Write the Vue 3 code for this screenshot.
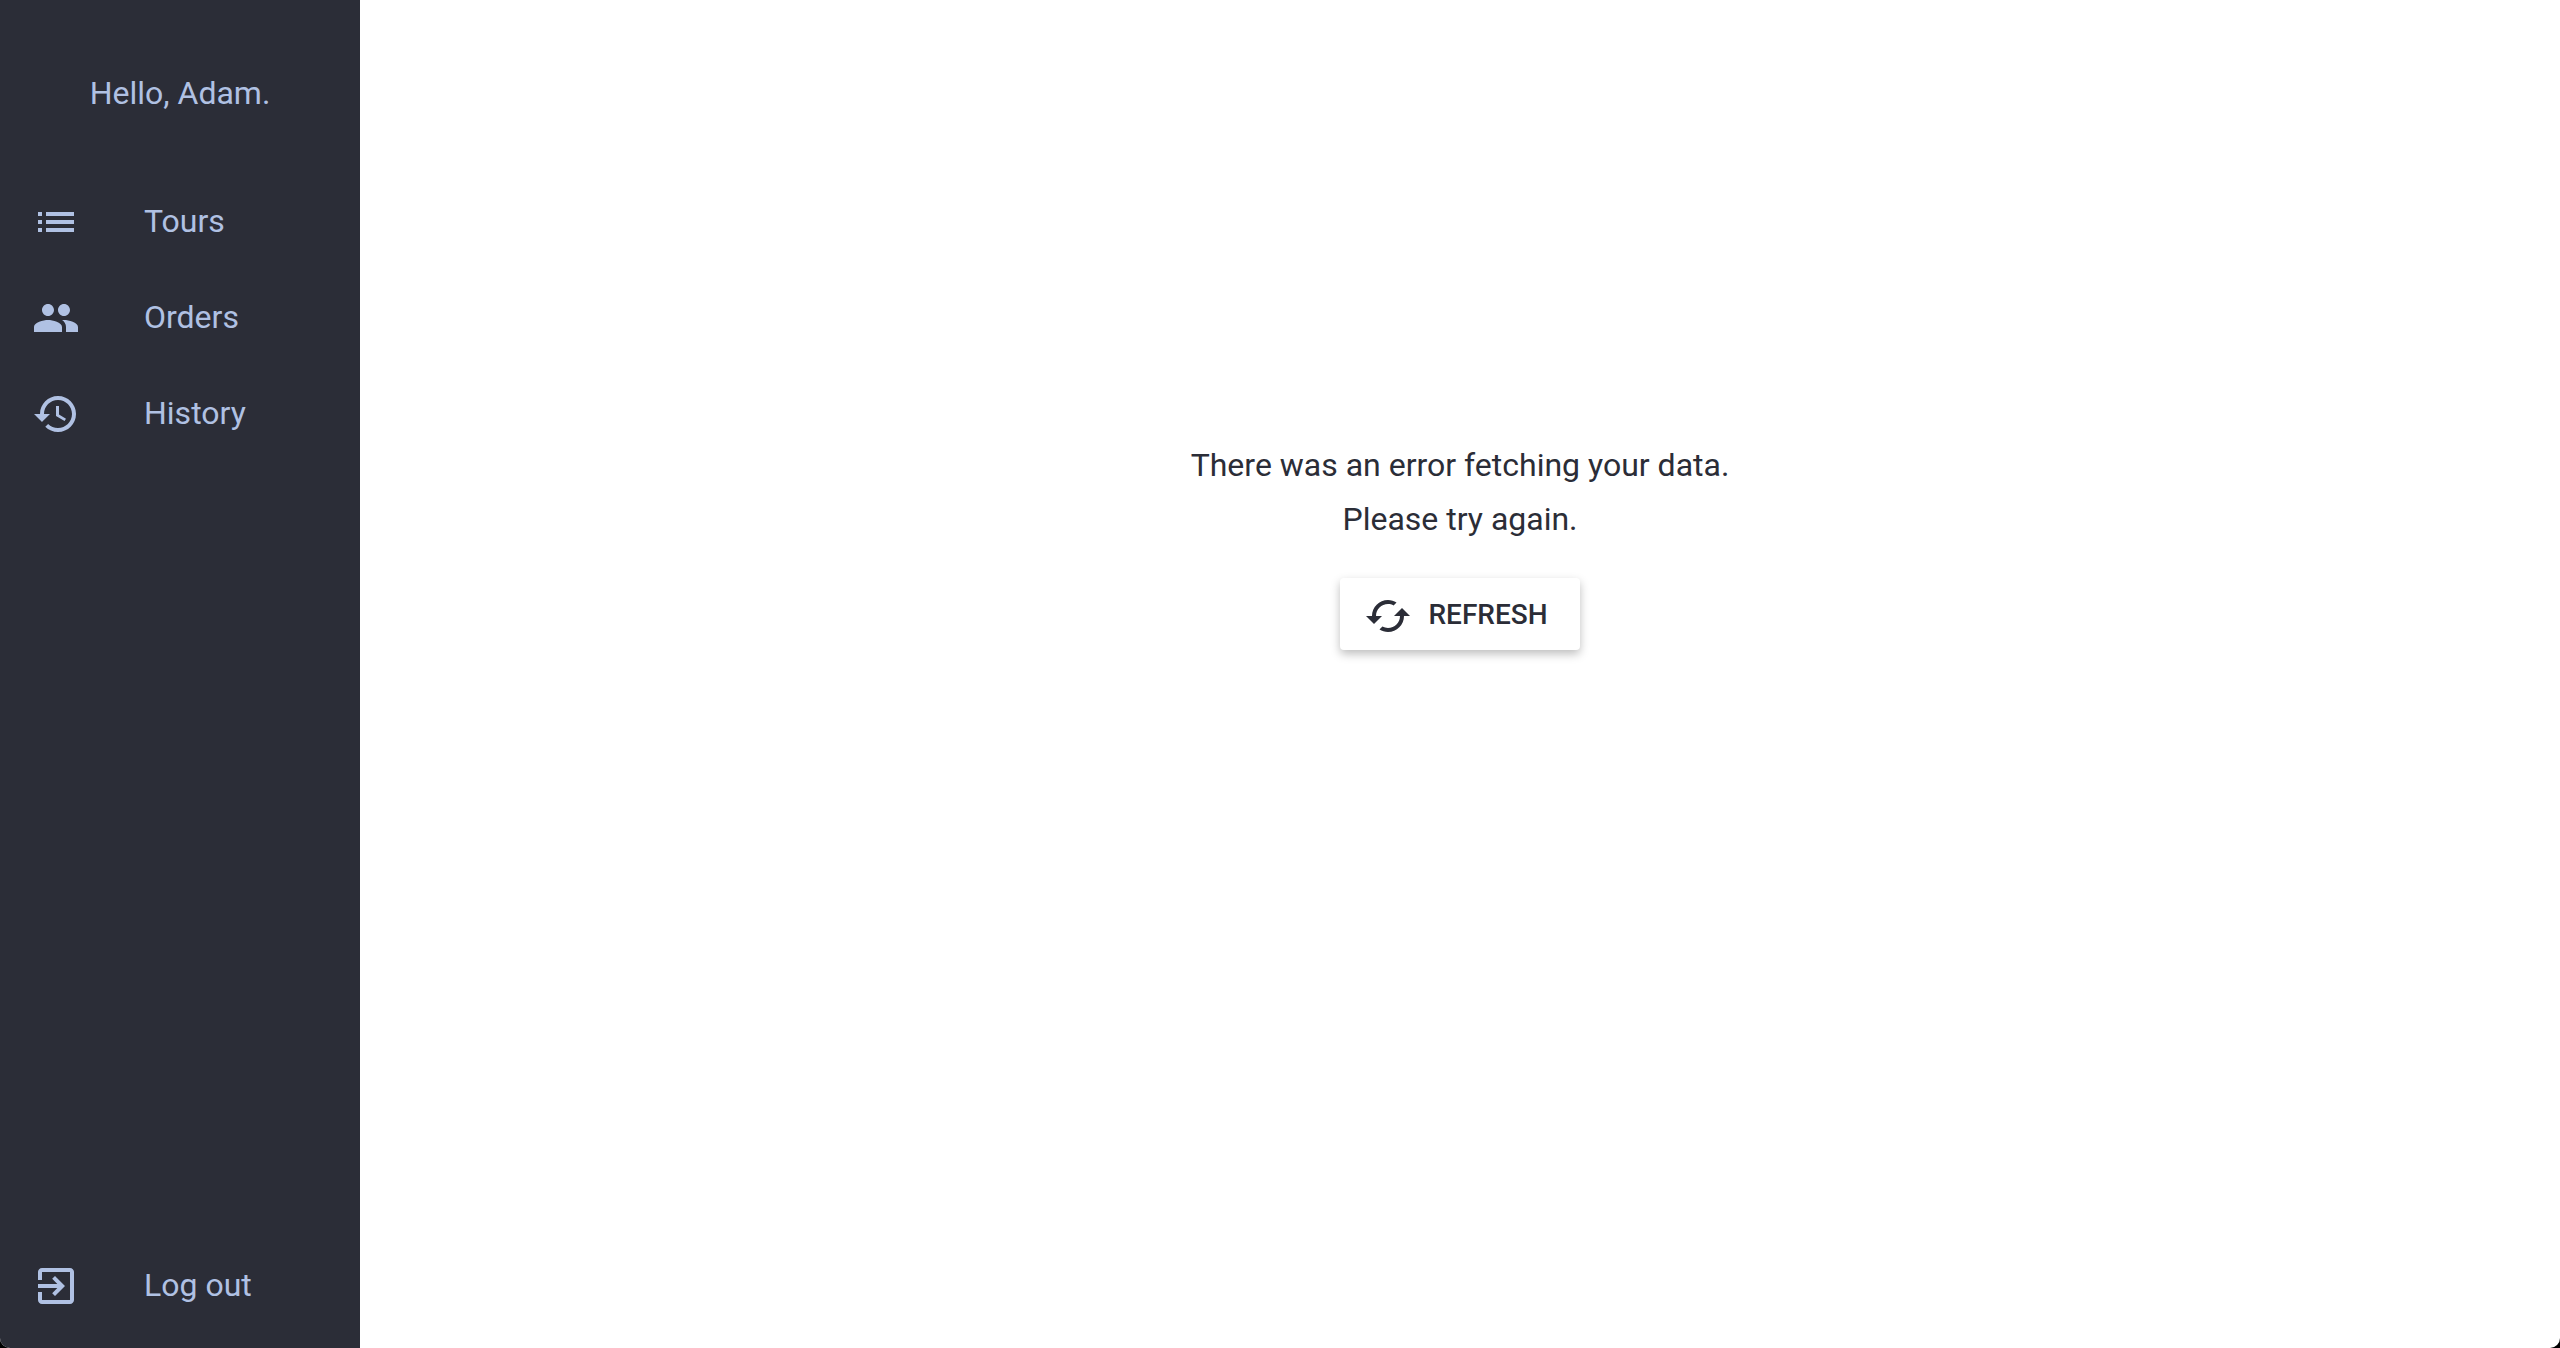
<script setup>
const links = [
  {
    label: 'Tours',
    icon: 'M3 13h2v-2H3v2zm0 4h2v-2H3v2zm0-8h2V7H3v2zm4 4h14v-2H7v2zm0 4h14v-2H7v2zM7 7v2h14V7H7z',
  },
  {
    label: 'Orders',
    icon: 'M16 11c1.66 0 2.99-1.34 2.99-3S17.66 5 16 5c-1.66 0-3 1.34-3 3s1.34 3 3 3zm-8 0c1.66 0 2.99-1.34 2.99-3S9.66 5 8 5C6.34 5 5 6.34 5 8s1.34 3 3 3zm0 2c-2.33 0-7 1.17-7 3.5V19h14v-2.5c0-2.33-4.67-3.5-7-3.5zm8 0c-.29 0-.62.02-.97.05 1.16.84 1.97 1.97 1.97 3.45V19h6v-2.5c0-2.33-4.67-3.5-7-3.5z',
  },
  {
    label: 'History',
    icon: 'M13 3c-4.97 0-9 4.03-9 9H1l3.89 3.89.07.14L9 12H6c0-3.87 3.13-7 7-7s7 3.13 7 7-3.13 7-7 7c-1.93 0-3.68-.79-4.94-2.06l-1.42 1.42C8.27 19.99 10.51 21 13 21c4.97 0 9-4.03 9-9s-4.03-9-9-9zm-1 5v5l4.28 2.54.72-1.21-3.5-2.08V8H12z',
  },
]
</script>

<template>
  <div class="app">
    <aside class="sidebar">
      <p class="greeting">Hello, Adam.</p>
      <nav class="links">
        <a v-for="link in links" :key="link.label" class="link">
          <svg class="icon" viewBox="0 0 24 24"><path :d="link.icon" /></svg>
          <span class="label">{{ link.label }}</span>
        </a>
      </nav>
      <a class="link logout">
        <svg class="icon" viewBox="0 0 24 24">
          <path d="M10.09 15.59L11.5 17l5-5-5-5-1.41 1.41L12.67 11H3v2h9.67l-2.58 2.59zM19 3H5c-1.11 0-2 .9-2 2v4h2V5h14v14H5v-4H3v4c0 1.1.89 2 2 2h14c1.1 0 2-.9 2-2V5c0-1.1-.9-2-2-2z" />
        </svg>
        <span class="label">Log out</span>
      </a>
    </aside>
    <main class="content">
      <p class="message">There was an error fetching your data.<br />Please try again.</p>
      <button class="refresh">
        <svg class="icon refresh-icon" viewBox="0 0 24 24">
          <path d="M19 8l-4 4h3c0 3.31-2.69 6-6 6-1.01 0-1.97-.25-2.8-.7l-1.46 1.46C8.97 19.54 10.43 20 12 20c4.42 0 8-3.58 8-8h3l-4-4zM6 12c0-3.31 2.69-6 6-6 1.01 0 1.97.25 2.8.7l1.46-1.46C15.03 4.46 13.57 4 12 4c-4.42 0-8 3.58-8 8H1l4 4 4-4H6z" />
        </svg>
        <span class="refresh-label">REFRESH</span>
      </button>
    </main>
  </div>
</template>

<style>
body {
  background: #000;
}
</style>

<style scoped>
.app {
  display: flex;
  height: 100vh;
  overflow: hidden;
  border-radius: 0 0 10px 10px;
  background: #fff;
  color: #2b2d37;
  font-family: Roboto, "Liberation Sans", sans-serif;
  font-size: 32px;
}
.sidebar {
  display: flex;
  flex-direction: column;
  box-sizing: border-box;
  width: 360px;
  padding-bottom: 14px;
  background: #2b2d37;
  color: #b0c1e3;
}
.greeting {
  margin: 66px 0 54px;
  line-height: 54px;
  text-align: center;
}
.link {
  display: flex;
  align-items: center;
  gap: 64px;
  height: 96px;
  padding-left: 32px;
}
.label {
  margin-bottom: 2px;
  line-height: 38px;
}
.logout {
  margin-top: auto;
}
.icon {
  flex: none;
  width: 48px;
  height: 48px;
  fill: currentColor;
}
.content {
  display: flex;
  flex: 1;
  flex-direction: column;
  align-items: center;
  padding-top: 438px;
}
.message {
  margin: 0 0 32px;
  line-height: 54px;
  text-align: center;
}
.refresh {
  display: flex;
  align-items: center;
  gap: 16.5px;
  box-sizing: border-box;
  width: 240px;
  height: 72px;
  padding: 0 24px;
  border: 0;
  border-radius: 4px;
  background: #fff;
  box-shadow: 0 4px 10px rgba(0, 0, 0, 0.26);
  color: inherit;
  font: 500 28px/34px Roboto, "Liberation Sans", sans-serif;
  white-space: nowrap;
}
.refresh-icon {
  margin-top: 4px;
}
.refresh-label {
  margin-top: 2px;
}
</style>
